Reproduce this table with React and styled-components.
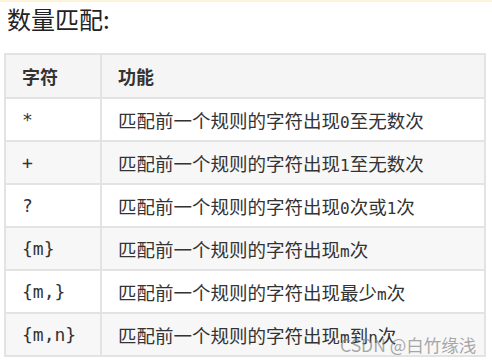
import React from 'react'
import styled, { createGlobalStyle } from 'styled-components'

const rows = [
  { code: '*', text: '匹配前一个规则的字符出现0至无数次' },
  { code: '+', text: '匹配前一个规则的字符出现1至无数次' },
  { code: '?', text: '匹配前一个规则的字符出现0次或1次' },
  { code: '{m}', text: '匹配前一个规则的字符出现m次' },
  { code: '{m,}', text: '匹配前一个规则的字符出现最少m次' },
  { code: '{m,n}', text: '匹配前一个规则的字符出现m到n次' },
]

// split text so latin letters/digits get the monospace face
function Mixed({ text }) {
  const parts = text.split(/([0-9a-z]+)/)
  return parts.map((p, i) => (/^[0-9a-z]+$/.test(p) ? <Mono key={i}>{p}</Mono> : p))
}

export default function App() {
  return (
    <Page>
      <GlobalStyle />
      <TopStrip />
      <Title>数量匹配:</Title>
      <Table>
        <thead>
          <tr>
            <Th $first>字符</Th>
            <Th>功能</Th>
          </tr>
        </thead>
        <tbody>
          {rows.map((r, i) => (
            <Row key={r.code} $odd={i % 2 === 1}>
              <CodeCell>{r.code}</CodeCell>
              <Td><Mixed text={r.text} /></Td>
            </Row>
          ))}
        </tbody>
      </Table>
      <Watermark>CSDN @白竹缘浅</Watermark>
    </Page>
  )
}

const GlobalStyle = createGlobalStyle`
  html, body {
    margin: 0;
    padding: 0;
    background: #fff;
  }
  body {
    font-family: "Noto Sans CJK SC", "Noto Sans", sans-serif;
    color: #333;
  }
`;

const Page = styled.div`
  position: relative;
  width: 492px;
  height: 364px;
  overflow: hidden;
  background: #fff;
`;

const TopStrip = styled.div`
  height: 2px;
  background: #fcf3d8;
`;

const Title = styled.h1`
  margin: 0;
  padding: 0 0 0 7px;
  height: 36px;
  font-size: 24px;
  font-weight: 400;
  line-height: 34px;
  color: #222;
`;

const Table = styled.table`
  margin: 15px 0 0 4px;
  width: 482px;
  border-collapse: collapse;
  border: 2px solid #e3e3e3;
  font-size: 18.5px;
`;

const Th = styled.th`
  height: 42px;
  padding: 0 0 0 16px;
  width: ${p => (p.$first ? '78px' : 'auto')};
  text-align: left;
  font-weight: 700;
  font-size: 18px;
  color: #333;
  background: #f5f5f5;
  border: 2px solid #e3e3e3;
`;

const Row = styled.tr`
  background: ${p => (p.$odd ? '#f7f7f7' : '#fff')};
`;

const Td = styled.td`
  height: 41px;
  padding: 0 0 0 16px;
  border: 2px solid #e3e3e3;
  color: #333;
  white-space: nowrap;
`;

const CodeCell = styled(Td)`
  font-family: "DejaVu Sans Mono", "Liberation Mono", monospace;
  font-size: 18px;
`;

const Mono = styled.span`
  font-family: "DejaVu Sans Mono", monospace;
  font-size: 16px;
`;

const Watermark = styled.div`
  position: absolute;
  left: 340px;
  top: 332px;
  font-size: 17.5px;
  color: rgba(130, 130, 130, 0.7);
  white-space: nowrap;
`;
